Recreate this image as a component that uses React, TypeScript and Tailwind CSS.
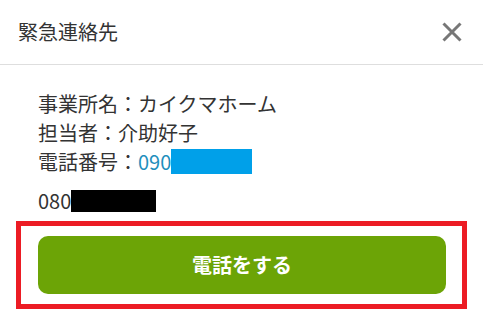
export default function App() {
  return (
    <div className="w-[483px] h-[325px] bg-white text-[#333] font-['Noto_Sans_CJK_JP','Noto_Sans',sans-serif] overflow-hidden">
      <div className="h-[65px] flex items-center justify-between pl-[18px] pr-[21px] border-b border-[#dedede]">
        <span className="text-[20px] leading-[28px] text-[#333]">緊急連絡先</span>
        <svg width="20" height="20" viewBox="0 0 20 20" className="block">
          <path d="M1.5 1.5 L18.5 18.5 M18.5 1.5 L1.5 18.5" stroke="#777" strokeWidth="3" strokeLinecap="butt" />
        </svg>
      </div>
      <div className="pt-[24px] pl-[38px] text-[20px] leading-[29px]">
        <div>事業所名：カイクマホーム</div>
        <div>担当者：介助好子</div>
        <div className="flex items-center">
          <span>電話番号：</span>
          <span className="text-[#1f8fbd]">090</span>
          <span className="inline-block w-[81px] h-[25px] bg-[#00a0e9]" />
        </div>
        <div className="flex items-center mt-[10px]">
          <span>080</span>
          <span className="inline-block w-[85px] h-[22px] bg-black mt-[1px]" />
        </div>
      </div>
      <div className="mx-[16px] mt-[6px] border-[5px] border-[#ec1c24] pt-[10px] pb-[10px] pl-[17px] pr-[16px]">
        <button className="w-full h-[58px] rounded-[10px] bg-[#6ca406] text-white font-bold text-[20px] flex items-center justify-center">
          電話をする
        </button>
      </div>
    </div>
  );
}
